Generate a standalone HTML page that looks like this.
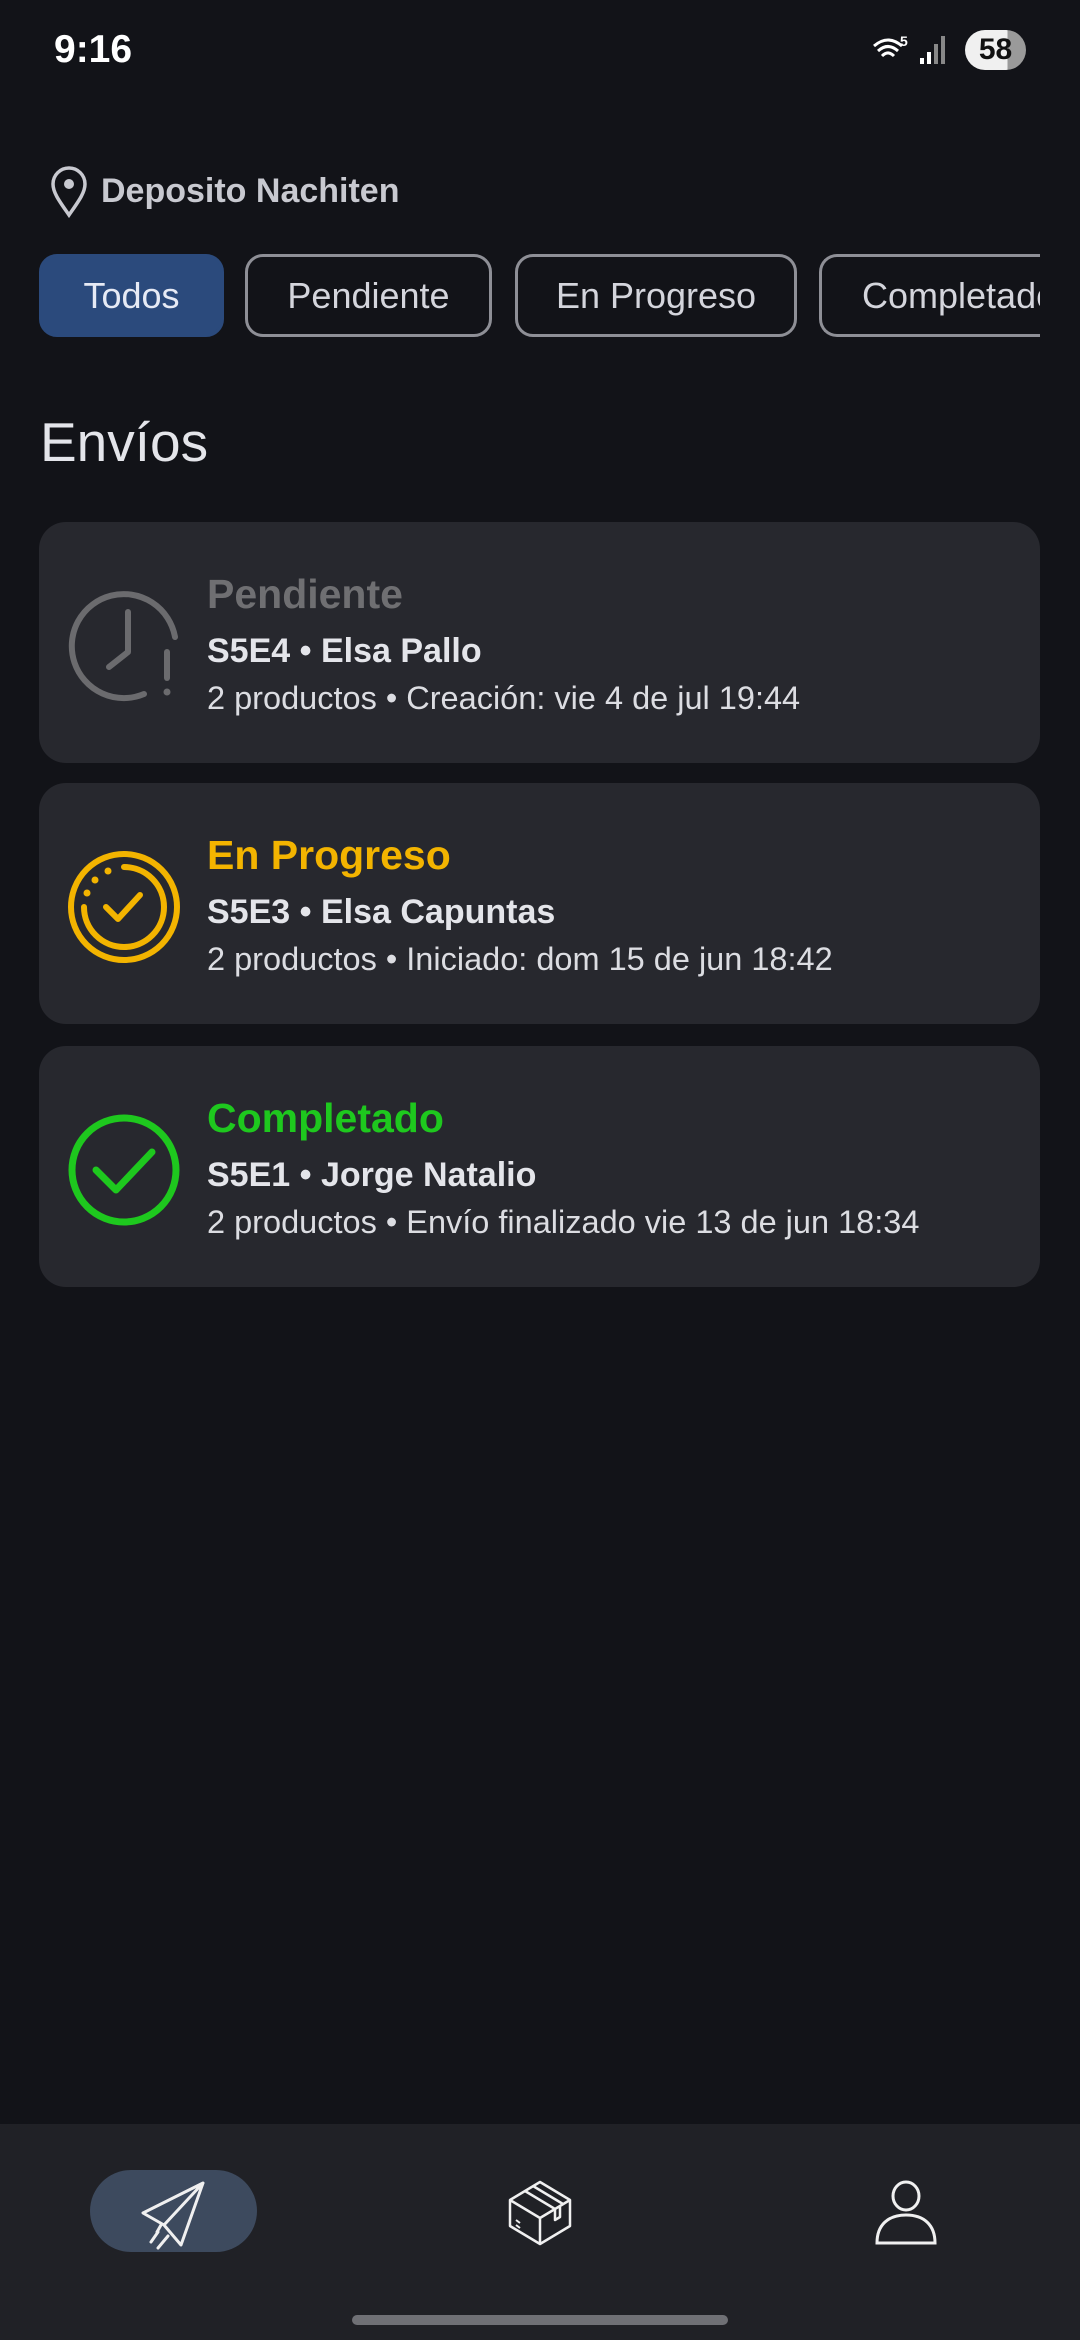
<!DOCTYPE html>
<html><head><meta charset="utf-8"><style>
*{margin:0;padding:0;box-sizing:border-box}
body{width:1080px;height:2340px;background:#121318;font-family:"Liberation Sans",sans-serif;position:relative;overflow:hidden;color:#e4e5ea}
.abs{position:absolute}
.chip{position:absolute;top:254px;height:83px;border:3px solid #8e8f96;border-radius:18px;color:#d4d5dc;font-size:36px;display:flex;align-items:center;justify-content:center;white-space:nowrap;overflow:hidden}
.card{position:absolute;left:39px;width:1001px;height:241px;background:#27282e;border-radius:27px}
.card svg{position:absolute;left:27px;top:66px}
.t1{position:absolute;left:168px;top:49px;font-size:41px;font-weight:bold}
.t2{position:absolute;left:168px;top:110px;font-size:34px;font-weight:bold;color:#e4e5ea}
.t3{position:absolute;left:168px;top:158px;font-size:32.5px;color:#dcdde2}
</style></head><body>
<div class="abs" style="left:54px;top:28px;font-size:39px;font-weight:bold;color:#fff">9:16</div>
<svg class="abs" style="left:870px;top:32px" width="90" height="36" viewBox="0 0 90 36">
<path d="M4 14 Q18 2 32 14 M8 19 Q18 10 28 19 M12 24 Q18 18 24 24" stroke="#fff" stroke-width="3" fill="none"/>
<text x="30" y="14" fill="#fff" font-size="14" font-family="Liberation Sans" font-weight="bold">5</text>
<rect x="50" y="26" width="4" height="6" fill="#fff"/><rect x="57" y="20" width="4" height="12" fill="#fff"/><rect x="64" y="12" width="4" height="20" fill="#888"/><rect x="71" y="4" width="4" height="28" fill="#888"/>
</svg>
<div class="abs" style="left:965px;top:30px;width:61px;height:40px;border-radius:20px;background:linear-gradient(90deg,#f0f0f0 70%,#9a9a9a 70%);color:#111;font-size:30px;font-weight:bold;display:flex;align-items:center;justify-content:center">58</div>

<svg class="abs" style="left:50px;top:166px" width="38" height="52" viewBox="0 0 38 52"><path d="M19 49 C10 36 3 27 3 18 A16 16 0 0 1 35 18 C35 27 28 36 19 49Z" fill="none" stroke="#c8c9d0" stroke-width="3.5"/><circle cx="19" cy="18" r="5" fill="#c8c9d0"/></svg>
<div class="abs" style="left:101px;top:172px;font-size:34px;font-weight:bold;color:#c8c9d0">Deposito Nachiten</div>

<div class="chip" style="left:39px;width:185px;background:#2b4a7c;border-color:#2b4a7c;color:#e6eaf5">Todos</div>
<div class="chip" style="left:245px;width:247px">Pendiente</div>
<div class="chip" style="left:515px;width:282px">En Progreso</div>
<div class="chip" style="left:819px;width:221px;border-right:none;border-radius:18px 0 0 18px;justify-content:flex-start;padding-left:40px">Completado</div>

<div class="abs" style="left:40px;top:410px;font-size:55px;color:#e4e5ea">Envíos</div>

<div class="card" style="top:522px">
<svg width="116" height="116" viewBox="0 0 116 116"><path d="M109 49 A52 52 0 1 0 78 106" fill="none" stroke="#6b6b6e" stroke-width="6" stroke-linecap="round"/><path d="M62 24 V64 L43 79" fill="none" stroke="#6b6b6e" stroke-width="6" stroke-linecap="round" stroke-linejoin="round"/><path d="M101 64 V90" stroke="#6b6b6e" stroke-width="6" stroke-linecap="round"/><circle cx="101" cy="104" r="3.5" fill="#6b6b6e"/></svg>
<div class="t1" style="color:#6f6f72">Pendiente</div>
<div class="t2">S5E4 • Elsa Pallo</div>
<div class="t3">2 productos • Creación: vie 4 de jul 19:44</div>
</div>
<div class="card" style="top:783px">
<svg width="116" height="116" viewBox="0 0 116 116"><circle cx="58" cy="58" r="53" fill="none" stroke="#f3b400" stroke-width="6"/><path d="M58 18 A40 40 0 1 1 18 58" fill="none" stroke="#f3b400" stroke-width="6" stroke-linecap="round"/><circle cx="42" cy="22" r="3.5" fill="#f3b400"/><circle cx="29" cy="31" r="3.5" fill="#f3b400"/><circle cx="21" cy="44" r="3.5" fill="#f3b400"/><path d="M40 58 L52 70 L74 46" fill="none" stroke="#f3b400" stroke-width="6" stroke-linecap="round" stroke-linejoin="round"/></svg>
<div class="t1" style="color:#f3b400">En Progreso</div>
<div class="t2">S5E3 • Elsa Capuntas</div>
<div class="t3">2 productos • Iniciado: dom 15 de jun 18:42</div>
</div>
<div class="card" style="top:1046px">
<svg width="116" height="116" viewBox="0 0 116 116"><circle cx="58" cy="58" r="52" fill="none" stroke="#1ec81e" stroke-width="7"/><path d="M30 58 L50 78 L86 40" fill="none" stroke="#1ec81e" stroke-width="7" stroke-linecap="round" stroke-linejoin="round"/></svg>
<div class="t1" style="color:#1ec81e">Completado</div>
<div class="t2">S5E1 • Jorge Natalio</div>
<div class="t3">2 productos • Envío finalizado vie 13 de jun 18:34</div>
</div>

<div class="abs" style="left:0;top:2124px;width:1080px;height:216px;background:#202126"></div>
<div class="abs" style="left:90px;top:2170px;width:167px;height:82px;border-radius:41px;background:#3d4a5e"></div>
<svg class="abs" style="left:138px;top:2180px" width="70" height="70" viewBox="0 0 70 70"><path d="M65 3 L5 33 L26 45 Z M65 3 L43 65 L26 45 M65 3 L26 45" fill="none" stroke="#f0f0f0" stroke-width="3" stroke-linejoin="round"/><path d="M20 52 L13 62 M30 56 L20 68 M23 45 L19 52" stroke="#f0f0f0" stroke-width="3" stroke-linecap="round"/></svg>
<svg class="abs" style="left:508px;top:2180px" width="64" height="66" viewBox="0 0 64 66"><path d="M32 2 L62 20 L62 46 L32 64 L2 46 L2 20 Z M2 20 L32 38 L62 20 M32 38 V64 M17 11 L47 29 M25 6 L55 24 M47 29 V40 L52 37 V27" fill="none" stroke="#f0f0f0" stroke-width="2.5" stroke-linejoin="round"/><path d="M8 40 L12 43 M8 45 L12 48" stroke="#f0f0f0" stroke-width="2"/></svg>
<svg class="abs" style="left:874px;top:2180px" width="64" height="66" viewBox="0 0 64 66"><ellipse cx="32" cy="16" rx="13" ry="14" fill="none" stroke="#f0f0f0" stroke-width="3"/><path d="M3 63 C3 45 14 35 32 35 C50 35 61 45 61 63 Z" fill="none" stroke="#f0f0f0" stroke-width="3"/></svg>
<div class="abs" style="left:352px;top:2315px;width:376px;height:10px;border-radius:5px;background:#6f7075"></div>
</body></html>
